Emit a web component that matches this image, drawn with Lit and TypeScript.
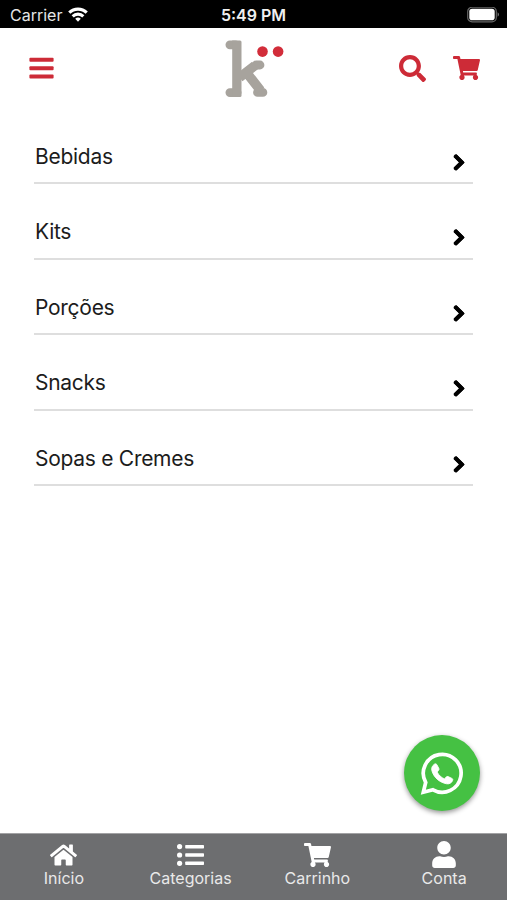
import { LitElement, html, css, svg } from "lit";
import { customElement } from "lit/decorators.js";

const cartPath =
  "M528.12 301.319l47.273-208C578.806 78.301 567.391 64 551.99 64H159.208l-9.166-44.81C147.758 8.021 137.93 0 126.529 0H24C10.745 0 0 10.745 0 24v16c0 13.255 10.745 24 24 24h69.883l70.248 343.435C147.325 417.1 136 435.222 136 456c0 30.928 25.072 56 56 56s56-25.072 56-56c0-15.674-6.447-29.835-16.824-40h209.647C430.447 426.165 424 440.326 424 456c0 30.928 25.072 56 56 56s56-25.072 56-56c0-22.172-12.888-41.332-31.579-50.405l5.517-24.276c3.413-15.018-8.002-29.319-23.403-29.319H218.117l-6.545-32h293.145c11.206 0 20.92-7.754 23.403-18.681z";
const searchPath =
  "M505 442.7L405.3 343c-4.5-4.5-10.6-7-17-7H372c27.6-35.3 44-79.7 44-128C416 93.1 322.9 0 208 0S0 93.1 0 208s93.1 208 208 208c48.3 0 92.7-16.4 128-44v16.3c0 6.4 2.5 12.5 7 17l99.7 99.7c9.4 9.4 24.6 9.4 33.9 0l28.3-28.3c9.4-9.4 9.4-24.6.1-34zM208 336c-70.7 0-128-57.2-128-128 0-70.7 57.2-128 128-128 70.7 0 128 57.2 128 128 0 70.7-57.2 128-128 128z";
const homePath =
  "M280.37 148.26L96 300.11V464a16 16 0 0 0 16 16l112.06-.29a16 16 0 0 0 15.92-16V368a16 16 0 0 1 16-16h64a16 16 0 0 1 16 16v95.64a16 16 0 0 0 16 16.05L464 480a16 16 0 0 0 16-16V300L295.67 148.26a12.19 12.19 0 0 0-15.3 0zM571.6 251.47L488 182.56V44.05a12 12 0 0 0-12-12h-56a12 12 0 0 0-12 12v72.61L318.47 43a48 48 0 0 0-61 0L4.34 251.47a12 12 0 0 0-1.6 16.9l25.5 31A12 12 0 0 0 45.15 301l235.22-193.74a12.19 12.19 0 0 1 15.3 0L530.9 301a12 12 0 0 0 16.9-1.6l25.5-31a12 12 0 0 0-1.7-16.93z";
const userPath =
  "M224 256c70.7 0 128-57.3 128-128S294.7 0 224 0 96 57.3 96 128s57.3 128 128 128zm89.6 32h-16.7c-22.2 10.2-46.9 16-72.9 16s-50.6-5.8-72.9-16h-16.7C60.2 288 0 348.2 0 422.4V464c0 26.5 21.5 48 48 48h352c26.5 0 48-21.5 48-48v-41.6c0-74.2-60.2-134.4-134.4-134.4z";

const glyph = (viewBox: string, d: string) =>
  html`<svg viewBox=${viewBox} fill="currentColor">${svg`<path d=${d} />`}</svg>`;

const chevron = html`<svg viewBox="0 0 13 21" fill="none" stroke="currentColor" stroke-width="4">
  <path d="M2 3.6L8.9 10.4L2 17.200" stroke-linejoin="miter" />
  <path d="M2.800 4.400L8.900 10.400L2.800 16.400" stroke-linecap="round" stroke-linejoin="round" />
</svg>`;

const listGlyph = html`<svg viewBox="0 0 27 24" fill="currentColor">
  <circle cx="2.6" cy="3.6" r="2.6" /><circle cx="2.6" cy="12" r="2.6" /><circle cx="2.6" cy="20.3" r="2.6" />
  <rect x="8.2" y="2" width="18.8" height="3.4" rx=".7" />
  <rect x="8.2" y="10.3" width="18.8" height="3.4" rx=".7" />
  <rect x="8.2" y="18.6" width="18.8" height="3.4" rx=".7" />
</svg>`;

@customElement("status-bar")
class StatusBar extends LitElement {
  static styles = css`
    :host {
      display: grid;
      grid-template-columns: 1fr auto 1fr;
      align-items: center;
      height: 27.5px;
      box-sizing: border-box;
      padding: 3px 8px 0 10px;
      background: #000;
      color: #e6e6e6;
      font-size: 16px;
      line-height: 24px;
    }
    .carrier { display: flex; align-items: center; gap: 6px; }
    .wifi { width: 20px; height: 15px; margin-bottom: 1px; }
    .time { font-weight: 600; margin-right: 2px; color: #f0f0f0; }
    .battery { justify-self: end; width: 32px; height: 17px; }
  `;
  render() {
    return html`
      <div class="carrier">
        <span>Carrier</span>
        <svg class="wifi" viewBox="0 0 21 16" fill="none" stroke="#fff" stroke-width="3.3">
          <path d="M1.2 6.1a13.2 13.2 0 0 1 18.6 0" />
          <path d="M4.8 9.9a8.1 8.1 0 0 1 11.4 0" />
          <path d="M10.5 15.6l-3-3a4.3 4.3 0 0 1 6 0z" fill="#fff" stroke="none" />
        </svg>
      </div>
      <div class="time">5:49 PM</div>
      <svg class="battery" viewBox="0 0 32 17">
        <rect x=".7" y=".2" width="28.6" height="14.6" rx="4.4" fill="none" stroke="#666" stroke-width="1.2" />
        <rect x="2.3" y="1.8" width="25.4" height="11.4" rx="2.8" fill="#fff" />
        <path d="M30.6 5.3q1.4.7 1.4 2.2t-1.4 2.2z" fill="#777" />
      </svg>
    `;
  }
}

@customElement("top-bar")
class TopBar extends LitElement {
  static styles = css`
    :host {
      display: grid;
      grid-template-columns: 1fr 60px 1fr;
      height: 81px;
      padding: 0 27px 0 29px;
      align-items: center;
      color: #cd2b37;
    }
    svg { display: block; }
    .menu { width: 25px; height: 28px; }
    .logo { width: 60px; height: 60px; margin-top: 1px; }
    .actions { display: flex; justify-content: flex-end; gap: 27px; }
    .search svg { width: 27px; height: 27px; margin-top: 1px; }
    .cart svg { width: 27px; height: 24px; margin-top: 2px; }
  `;
  render() {
    return html`
      <svg class="menu" viewBox="0 0 25 28" fill="currentColor">
        <rect x=".4" y="3.8" width="24.2" height="4" rx="1" />
        <rect x=".4" y="12.2" width="24.2" height="4" rx="1" />
        <rect x=".4" y="20.6" width="24.2" height="4" rx="1" />
      </svg>
      <svg class="logo" viewBox="0.5 0 60 60">
        <g fill="none" stroke="#a7a39d" stroke-width="8.8" stroke-linecap="round">
          <path d="M5.4 5.8H11M5.4 53.6H12.6" />
          <path d="M31.5 26H35.5M33 53.4H38.4" />
          <path d="M15 38.5L30.5 26.5M22 33.5L36 51.5" stroke-linecap="butt" stroke-width="9.6" />
        </g>
        <path d="M7.7 1.4H15.5Q17 1.4 17 3V56.5Q17 58 15.5 58H7.7z" fill="#a7a39d" />
        <circle cx="38" cy="12.6" r="5.3" fill="#d22d3a" />
        <circle cx="53.6" cy="12.6" r="5.3" fill="#d22d3a" />
      </svg>
      <div class="actions">
        <span class="search">${glyph("0 0 512 512", searchPath)}</span>
        <span class="cart">${glyph("0 0 576 512", cartPath)}</span>
      </div>
    `;
  }
}

@customElement("category-list")
class CategoryList extends LitElement {
  static styles = css`
    :host { display: block; padding: 0 34px; }
    .row {
      display: flex;
      justify-content: space-between;
      align-items: flex-end;
      height: 75.55px;
      box-sizing: border-box;
      border-bottom: 2px solid #dedede;
      padding: 0 7px 9.5px 1px;
      color: #1c1c1c;
      font-size: 21px;
      letter-spacing: -0.28px;
      line-height: 32px;
    }
    svg { display: block; width: 13px; height: 21px; color: #000; }
  `;
  render() {
    return ["Bebidas", "Kits", "Porções", "Snacks", "Sopas e Cremes"].map(
      (name) => html`<div class="row"><span class="name">${name}</span>${chevron}</div>`
    );
  }
}

@customElement("tab-bar")
class TabBar extends LitElement {
  static styles = css`
    :host {
      display: grid;
      grid-template-columns: repeat(4, 1fr);
      height: 67.5px;
      box-sizing: border-box;
      border-top: 1px solid #a2a2a4;
      background: #6d6e70;
      color: #fff;
    }
    .tab { display: flex; flex-direction: column; align-items: center; padding: 8px 0 0 1px; }
    .icon { height: 26px; display: flex; align-items: center; }
    svg { display: block; width: 27px; height: 24px; }
    .person svg { height: 27px; width: 24px; }
    .label { font-size: 16px; line-height: 20px; color: #e9e9e9; }
  `;
  render() {
    const tabs = [
      { label: "Início", kind: "", icon: glyph("0 0 576 512", homePath) },
      { label: "Categorias", kind: "", icon: listGlyph },
      { label: "Carrinho", kind: "", icon: glyph("0 0 576 512", cartPath) },
      { label: "Conta", kind: "person", icon: glyph("0 0 448 512", userPath) },
    ];
    return tabs.map(
      (t) => html`<div class="tab"><span class="icon ${t.kind}">${t.icon}</span><span class="label">${t.label}</span></div>`
    );
  }
}

@customElement("app-root")
class AppRoot extends LitElement {
  static styles = css`
    :host {
      display: flex;
      flex-direction: column;
      position: relative;
      height: 900px;
      background: #fff;
      font-family: Inter, "Liberation Sans", sans-serif;
      overflow: hidden;
    }
    .content { flex: 1; }
    .chat {
      position: absolute;
      right: 27px;
      bottom: 89px;
      width: 76px;
      height: 76px;
      border-radius: 50%;
      background: #45c143;
      box-shadow: 0 2px 5px rgba(0, 0, 0, 0.42);
    }
    .chat svg { display: block; width: 76px; height: 76px; }
  `;
  render() {
    return html`
      <status-bar></status-bar>
      <top-bar></top-bar>
      <category-list class="content"></category-list>
      <div class="chat">
        <svg viewBox="0 0 76 76">
          <path
            d="M19.3 57.3L21.7 47.5A18.9 18.9 0 1 1 29 54.8z"
            fill="none" stroke="#fff" stroke-width="3.7" stroke-linejoin="miter" />
          <path
            transform="translate(3.8 4.8) scale(.86)"
            d="M30.6 28.6c1-.9 2.4-.9 3.1.2l2.3 4.3c.5.9.3 1.8-.4 2.6l-1.5 1.8c1.9 3.7 4.7 6.3 8.6 8l1.9-2.2c.6-.7 1.4-.9 2.3-.5l4.4 2.1c1 .5 1.2 1.3.8 2.4-1 2.9-4.1 4.5-7.4 3.8-8.3-1.8-14.4-7.4-16.7-15.2-.8-3 .3-5.5 2.6-7.3z"
            fill="#fff" stroke="#fff" stroke-width="1" stroke-linejoin="round" />
        </svg>
      </div>
      <tab-bar></tab-bar>
    `;
  }
}
